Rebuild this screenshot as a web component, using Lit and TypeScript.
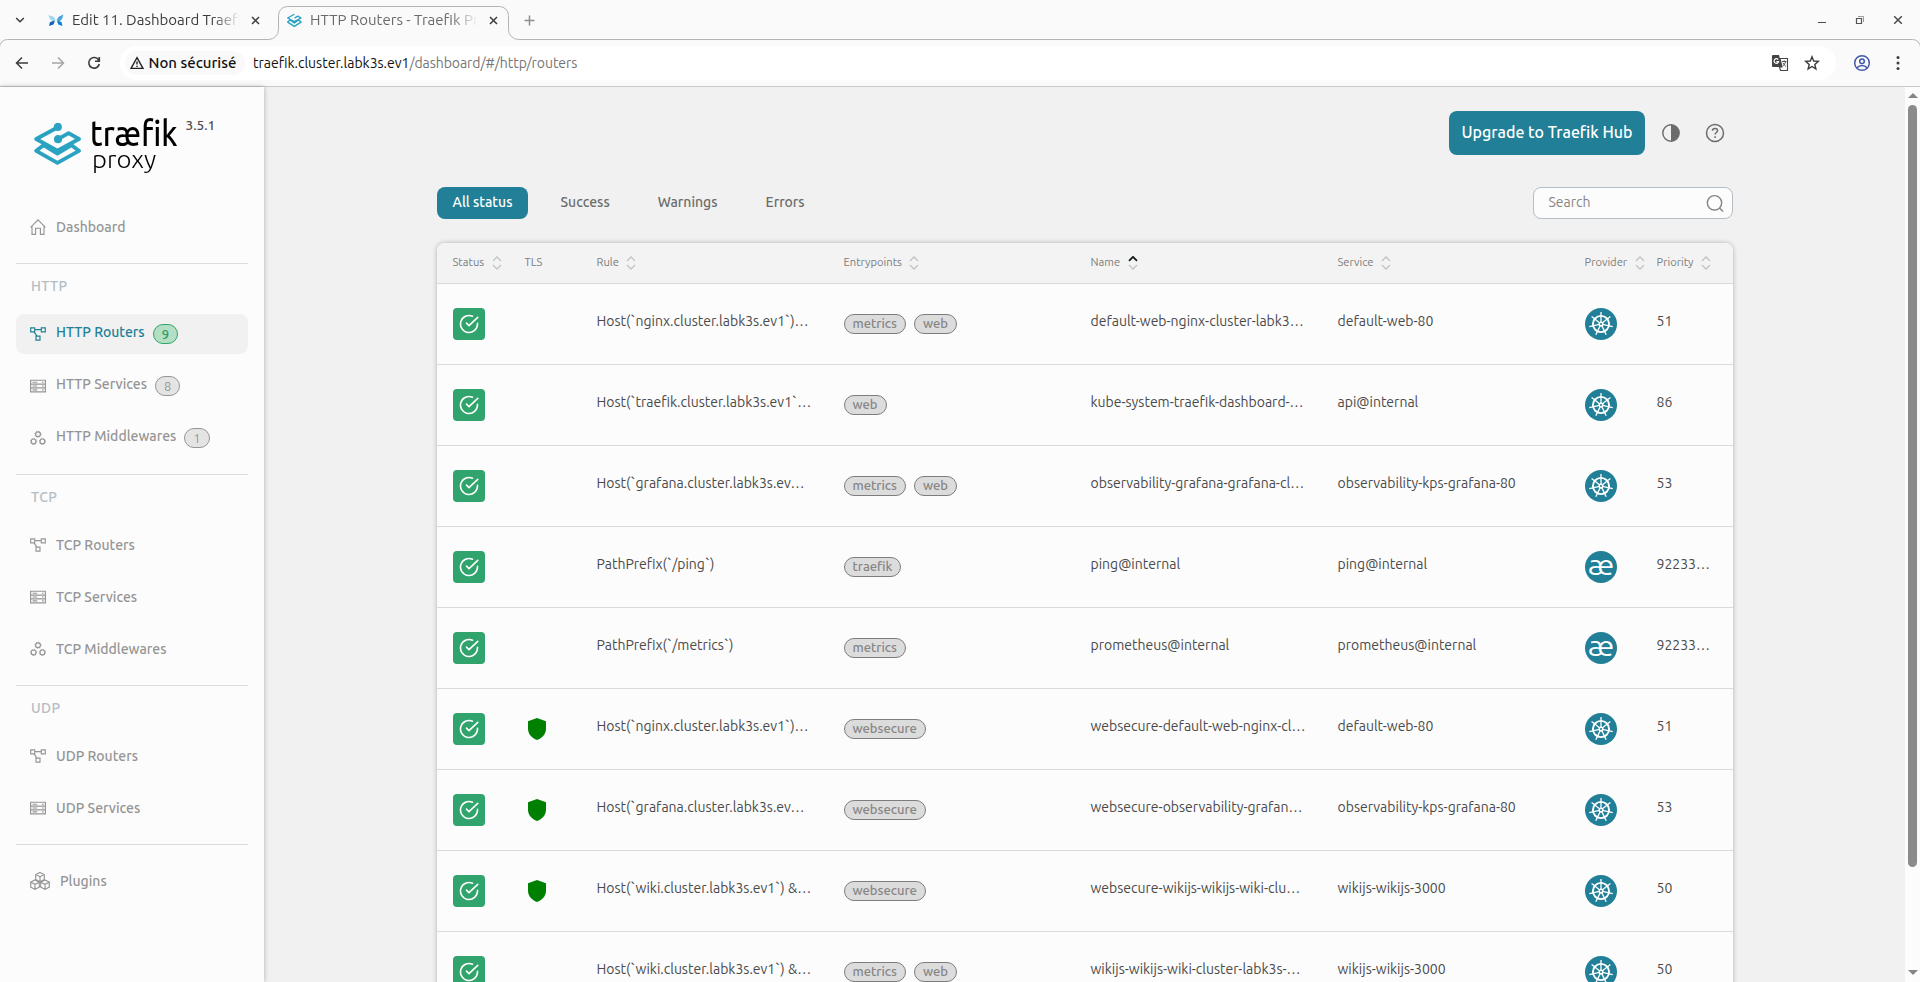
import { LitElement, html, css, svg, nothing } from "lit";
import { customElement, property } from "lit/decorators.js";

/* Wordmark text squeezed horizontally to an exact advance width. */
@customElement("fit-text")
class FitText extends LitElement {
  @property({ type: Number }) w = 0;
  static styles = css`
    :host { display: inline-block; white-space: nowrap; flex: none; }
    .t { display: inline-block; transform-origin: 0 50%; }
  `;
  render() { return html`<span class="t"><slot></slot></span>`; }
  updated() {
    const t = this.renderRoot.querySelector(".t") as HTMLElement;
    this.style.width = this.w + "px";
    const natural = t.offsetWidth;
    if (natural) t.style.transform = `scaleX(${this.w / natural})`;
  }
}

const cube = (x: number, y: number) => svg`<g transform="translate(${x} ${y})"><path d="M0 -4.6 4.3 -2.4V2.5L0 4.8-4.3 2.5V-2.4ZM-4.3 -2.4 0 -.3 4.3 -2.4M0 -.3V4.8"/></g>`;
const gear = (x: number, y: number) => svg`<circle cx=${x} cy=${y} r="2.4"/><circle cx=${x} cy=${y} r="3.1" stroke-width=".9" stroke-dasharray="1 1.434"/>`;

const navIcons: Record<string, unknown> = {
  home: html`<svg width="16" height="16" viewBox="0 0 16 16"><path d="M.6 8.3 8 .9l7.4 7.4M2 7.2v8.2h3.6V9.2h4.8v6.2H14V7.2"/></svg>`,
  routers: html`<svg width="16" height="16" viewBox="0 0 16 16"><path d="M.7 1.9h4v4h-4zM11.3 1.9h4v4h-4zM6 10.1h4v4H6zM4.7 3.6h6.6M4 5.9l3 4.2"/></svg>`,
  services: html`<svg width="16" height="16" viewBox="0 0 16 16"><path d="M.6 2.2h14.8v11.6H.6zM.6 6.1h14.8M.6 9.9h14.8M2.6 4.2h4.6M2.6 8h4.6M2.6 11.9h4.6M12 4.2h1.6M12 8h1.6M12 11.9h1.6"/></svg>`,
  middlewares: html`<svg width="16" height="16" viewBox="0 0 16 16">${gear(8, 4.2)}${gear(3.6, 11.4)}${gear(12.4, 11.4)}</svg>`,
  plugins: html`<svg width="20" height="20" viewBox="0 0 20 20">${cube(10, 6)}${cube(5, 13.6)}${cube(15, 13.6)}</svg>`,
};

type NavItem = [string, string, string?];
const sections: { label?: string; items: NavItem[] }[] = [
  { items: [["home", "Dashboard"]] },
  { label: "HTTP", items: [["routers", "HTTP Routers", "9"], ["services", "HTTP Services", "8"], ["middlewares", "HTTP Middlewares", "1"]] },
  { label: "TCP", items: [["routers", "TCP Routers"], ["services", "TCP Services"], ["middlewares", "TCP Middlewares"]] },
  { label: "UDP", items: [["routers", "UDP Routers"], ["services", "UDP Services"]] },
  { items: [["plugins", "Plugins"]] },
];

@customElement("side-nav")
class SideNav extends LitElement {
  static styles = css`
    :host { display: block; width: 264px; flex: none; background: #fcfcfc; box-shadow: 0 0 5px rgba(0,0,0,.28); z-index: 1; box-sizing: border-box; padding: 0 16px; color: #959595; font-weight: 500; }
    .brand { display: flex; height: 104px; padding: 27px 0 0 18px; box-sizing: border-box; }
    .mark { margin-top: 9px; }
    .words { color: #000; margin-left: 8px; width: 88px; display: flex; flex-direction: column; padding-top: 2px; }
    .word { font-size: 34.5px; line-height: 36px; height: 29px; }
    .sub { font-size: 25px; line-height: 28px; font-weight: 300; padding-left: 2px; }
    .ver { font-size: 13.6px; line-height: 18px; color: #4c4c4c; margin: 2px 0 0 7.5px; }
    section { border-bottom: 1px solid #dcdcdc; padding: 16px 0; display: flex; flex-direction: column; gap: 12px; }
    section.labeled { padding-top: 0; }
    section:last-child { border: 0; }
    .label { height: 38px; padding: 12px 0 0 15px; box-sizing: border-box; color: #b4bcc4; letter-spacing: .4px; }
    .item { height: 40px; border-radius: 8px; display: flex; align-items: center; padding-left: 14px; white-space: nowrap; }
    .item svg { fill: none; stroke: currentColor; stroke-width: 1.15; margin-right: 10px; flex: none; }
    .counted .name { padding-bottom: 5px; }
    .active { background: #f1f1f1; color: #217f97; }
    .badge { margin-left: 8px; height: 20px; min-width: 25px; padding: 0 8px; box-sizing: border-box; border: 1px solid #959595; background: #e4e4e4; border-radius: 10px; font-size: 13px; line-height: 19px; text-align: center; font-weight: 400; }
    .active .badge { background: #b4dfc4; border-color: #30a46c; color: #2b9a66; font-weight: 500; }
  `;
  render() {
    return html`
      <div class="brand">
        <svg class="mark" width="48" height="46" viewBox="0 0 48 46" fill="none" stroke="#2aa2c1" stroke-width="3.8" stroke-linejoin="round" stroke-linecap="round">
          <path d="M23.4 4.5 2.2 16l21.2 11.6L45 16 34.6 10.2 24 16.2"/>
          <path d="M9.5 22.2 2.2 27.8l21.2 12 21.6-12-7.5-5.6" />
          <path d="M9.5 22.2 23.4 30.5 37.5 22.2" />
          <circle cx="23.8" cy="3.9" r="2.2" fill="#2aa2c1"/><circle cx="24" cy="16.2" r="2.2" fill="#2aa2c1"/>
        </svg>
        <div class="words"><div class="word"><fit-text w="87.5">træfik</fit-text></div><div class="sub"><fit-text w="64">proxy</fit-text></div></div>
        <div class="ver">3.5.1</div>
      </div>
      ${sections.map((s) => html`<section class=${s.label ? "labeled" : ""}>
        ${s.label ? html`<div class="label">${s.label}</div>` : nothing}
        ${s.items.map(([icon, text, n]) => html`<div class="item ${n ? "counted" : ""} ${n === "9" ? "active" : ""}">
          ${navIcons[icon]}<span class="name">${text}</span>${n ? html`<span class="badge">${n}</span>` : nothing}
        </div>`)}
      </section>`)}
    `;
  }
}

const N1 = "Host(`nginx.cluster.labk3s.ev1`)…", G1 = "Host(`grafana.cluster.labk3s.ev…", W1 = "Host(`wiki.cluster.labk3s.ev1`) &…";
const rows: { tls?: boolean; rule: string; eps: string[]; name: string; svc: string; internal?: boolean; prio: string }[] = [
  { rule: N1, eps: ["metrics", "web"], name: "default-web-nginx-cluster-labk3…", svc: "default-web-80", prio: "51" },
  { rule: "Host(`traefik.cluster.labk3s.ev1`…", eps: ["web"], name: "kube-system-traefik-dashboard-…", svc: "api@internal", prio: "86" },
  { rule: G1, eps: ["metrics", "web"], name: "observability-grafana-grafana-cl…", svc: "observability-kps-grafana-80", prio: "53" },
  { rule: "PathPrefix(`/ping`)", eps: ["traefik"], name: "ping@internal", svc: "ping@internal", internal: true, prio: "92233…" },
  { rule: "PathPrefix(`/metrics`)", eps: ["metrics"], name: "prometheus@internal", svc: "prometheus@internal", internal: true, prio: "92233…" },
  { tls: true, rule: N1, eps: ["websecure"], name: "websecure-default-web-nginx-cl…", svc: "default-web-80", prio: "51" },
  { tls: true, rule: G1, eps: ["websecure"], name: "websecure-observability-grafan…", svc: "observability-kps-grafana-80", prio: "53" },
  { tls: true, rule: W1, eps: ["websecure"], name: "websecure-wikijs-wikijs-wiki-clu…", svc: "wikijs-wikijs-3000", prio: "50" },
  { rule: W1, eps: ["metrics", "web"], name: "wikijs-wikijs-wiki-cluster-labk3s-…", svc: "wikijs-wikijs-3000", prio: "50" },
];
const heads = ["Status", "TLS", "Rule", "Entrypoints", "Name", "Service", "Provider", "Priority"];

const spokes = [0, 1, 2, 3, 4, 5, 6].map((i) => svg`<path transform="rotate(${(i * 360) / 7} 16 16)" d="M16 4V14.5" />`);
const kube = html`<svg width="32" height="32" viewBox="0 0 32 32"><circle cx="16" cy="16" r="16" fill="#217f97"/><g stroke="#fff" fill="none" stroke-width="1.3"><circle cx="16" cy="16" r="8.1" stroke-width="1.9"/>${spokes}<circle cx="16" cy="16" r="1.8" stroke-width="1.5"/></g></svg>`;
const internalIcon = html`<svg width="32" height="32" viewBox="0 0 32 32"><circle cx="16" cy="16" r="16" fill="#217f97"/><text x="16" y="23.6" text-anchor="middle" font-size="28.5" font-weight="400" fill="#fff" textLength="26.5" lengthAdjust="spacingAndGlyphs">æ</text></svg>`;
const okIcon = html`<svg width="20" height="20" viewBox="0 0 24 24" fill="none" stroke="#fff" stroke-width="1.9" stroke-linecap="round" stroke-linejoin="round"><path d="M22.2 11.08V12a10.200 10.200 0 1 1-6-9.300"/><path d="M22.500 4 12 14 9 11"/></svg>`;
const shield = html`<svg class="shield" width="18" height="22" viewBox="0 0 18 22"><path d="M9 0 18 3.2V11c0 5-4 9-9 11C4 20 0 16 0 11V3.2Z" fill="#008000"/></svg>`;
const sorter = (up: boolean) => html`<svg width="10" height="14" viewBox="0 0 10 14" fill="none" stroke="#c1c8cd" stroke-width="1.4"><path d="M1 4.9 5 .9l4 4" stroke=${up ? "#11181c" : "#c1c8cd"} stroke-width=${up ? 1.8 : 1.4}/><path d="M1 9.1l4 4 4-4"/></svg>`;

@customElement("router-table")
class RouterTable extends LitElement {
  static styles = css`
    :host { display: block; width: 1296px; background: #fcfcfc; border-radius: 8px 8px 0 0; box-shadow: 0 0 5px rgba(0,0,0,.28); }
    .row { display: grid; grid-template-columns: 72px 72px 247px 247px 247px 247px 72px 72px; padding-left: 16px; border-bottom: 1px solid #dadada; height: 80px; color: #4a4a4a; }
    .head { height: 40px; background: #f3f3f3; border-radius: 8px 8px 0 0; color: #7c7c7c; font-size: 11.2px; }
    .cell { display: flex; align-items: center; white-space: nowrap; }
    .head .cell { gap: 7.5px; padding-bottom: 2px; box-sizing: border-box; }
    .head svg { margin-top: 2px; }
    .text { padding-bottom: 6px; }
    .ok { width: 32px; height: 32px; border-radius: 4px; background: #30a46c; display: flex; align-items: center; justify-content: center; }
    .shield { margin-left: 3px; }
    .eps { gap: 8px; }
    .pill { height: 20px; box-sizing: border-box; border: 1px solid #7d7d7d; border-radius: 10px; background: #dcdcdc; color: #868686; font-size: 13px; font-weight: 500; line-height: 16.5px; padding: 0 8px; }
  `;
  render() {
    return html`
      <div class="row head">${heads.map((t) => html`<div class="cell"><span>${t}</span>${t !== "TLS" ? sorter(t === "Name") : nothing}</div>`)}</div>
      ${rows.map((r) => html`<div class="row">
        <div class="cell"><div class="ok">${okIcon}</div></div>
        <div class="cell">${r.tls ? shield : nothing}</div>
        <div class="cell text">${r.rule}</div>
        <div class="cell eps">${r.eps.map((t) => html`<div class="pill">${t}</div>`)}</div>
        <div class="cell text">${r.name}</div>
        <div class="cell text">${r.svc}</div>
        <div class="cell">${r.internal ? internalIcon : kube}</div>
        <div class="cell text">${r.prio}</div>
      </div>`)}
    `;
  }
}

const closeIcon = html`<svg width="9" height="9" viewBox="0 0 9 9"><path d="M1 1l7 7M8 1 1 8" stroke="#3c3c3c" stroke-width="1.5"/></svg>`;

@customElement("browser-chrome")
class BrowserChrome extends LitElement {
  static styles = css`
    :host { display: block; position: relative; height: 87px; background: #fafafa; box-sizing: border-box; border-bottom: 1px solid #c9c9c9; color: #3c3c3c; }
    .outline { position: absolute; left: 0; top: 0; pointer-events: none; }
    .tabs { height: 40px; display: flex; align-items: center; font-size: 15px; }
    .chev { margin-left: 15px; }
    .tab { display: flex; align-items: center; width: 213px; margin-left: 23px; }
    .tab.current { margin-left: 26px; color: #6a6a6a; width: 212px; }
    .title { width: 168px; margin: 0 11px 0 8px; overflow: hidden; white-space: nowrap; flex: none; -webkit-mask-image: linear-gradient(90deg, #000 84%, transparent 100%); }
    .plus { margin-left: 25px; }
    .grow { flex: 1; }
    .win { display: flex; align-items: center; gap: 28px; padding-right: 17px; }
    .bar { height: 46px; display: flex; align-items: center; }
    .nav { display: flex; gap: 20px; margin-left: 14px; width: 106px; }
    .omni { flex: none; width: 1716px; height: 34px; border-radius: 17px; background: #fff; display: flex; align-items: center; box-sizing: border-box; padding: 0 16px 0 5px; }
    .chip { background: #f9f9f9; height: 24px; border-radius: 12px; width: 120px; box-sizing: border-box; padding-left: 5px; display: flex; align-items: center; gap: 4.5px; color: #111; font-weight: 500; font-size: 15px; margin-right: 8px; white-space: nowrap; }
    .host { color: #111; } .path { color: #757575; letter-spacing: -.06px; }
    .star { margin-left: 15px; }
    .me { margin-left: 17px; } .dots { margin-left: 25px; }
  `;
  render() {
    return html`
      <svg class="outline" width="1920" height="87" viewBox="0 0 1920 87" fill="none" stroke="#b2b4b3"><path d="M-.5 47.5a8 8 0 0 1 8-8H268.500a10 10 0 0 0 10-10V15.500a9 9 0 0 1 9-9H499.500a9 9 0 0 1 9 9V29.500a10 10 0 0 0 10 10H1912.500a8 8 0 0 1 8 8"/></svg>
      <div class="tabs">
        <svg class="chev" width="10" height="8" viewBox="0 0 10 8"><path d="M1.200 2 5 5.800 8.800 2" fill="none" stroke="#3c3c3c" stroke-width="1.500"/></svg>
        <div class="tab">
          <svg width="16" height="16" viewBox="0 0 16 16"><path d="M.5 3 6 5l1.500 3L5 9.500 2 7Z" fill="#9fd6ee"/><path d="M15.500 2.500 11 4.500 8.500 8l3 1.500L14 7Z" fill="#4aa5dd"/><path d="M1 14l1-4 5-1.500L5.500 12.500Z" fill="#1565b8"/><path d="M14.500 14 13.500 10 8.800 8.500l1.500 4Z" fill="#0d7fd6"/></svg>
          <div class="title">Edit 11. Dashboard Traefik</div>${closeIcon}
        </div>
        <div class="tab current">
          <svg width="15" height="15" viewBox="0 0 48 46" fill="none" stroke="#2aa2c1" stroke-width="4.500" stroke-linejoin="round"><path d="M23.400 3 2.200 15l21.200 11.600L45 15 34.600 9.200 24 15.200M9.500 21.200 2.200 28l21.200 14L45 28l-7.500-6.800L23.400 31Z"/></svg>
          <div class="title">HTTP Routers - Traefik Proxy</div>${closeIcon}
        </div>
        <svg class="plus" width="11" height="11" viewBox="0 0 11 11"><path d="M5.500 .5v10M.5 5.500h10" stroke="#8d8d8d" stroke-width="1.500"/></svg>
        <div class="grow"></div>
        <div class="win">
          <svg width="10" height="10" viewBox="0 0 10 10"><path d="M1 7.500h8" stroke="#4a4a4a"/></svg>
          <svg width="10" height="10" viewBox="0 0 10 10" fill="none" stroke="#555"><path d="M1.500 3.500h5v5h-5z" stroke-width="1.200"/><path d="M3 1.500h5.500V7" stroke="#999"/></svg>
          <svg width="10" height="10" viewBox="0 0 10 10"><path d="M1.200 1.200l7.600 7.600M8.800 1.200 1.200 8.800" stroke="#4a4a4a" stroke-width="1.500"/></svg>
        </div>
      </div>
      <div class="bar">
        <div class="nav">
          <svg width="16" height="16" viewBox="0 0 16 16" fill="none" stroke="#3c3c3c" stroke-width="1.500"><path d="M14 8H2.800M8 2.500 2.500 8 8 13.500"/></svg>
          <svg width="16" height="16" viewBox="0 0 16 16" fill="none" stroke="#a5a5a5" stroke-width="1.500"><path d="M2 8h11.200M8 2.500 13.500 8 8 13.500"/></svg>
          <svg width="16" height="16" viewBox="0 0 16 16" fill="none" stroke="#3c3c3c" stroke-width="1.600"><path d="M12.600 5A5.300 5.300 0 1 0 13.300 9M13.300 2v4.200H9"/></svg>
        </div>
        <div class="omni">
          <div class="chip"><svg width="14" height="14" viewBox="0 0 14 14" fill="none" stroke="#222" stroke-width="1.400"><path d="M7 1.600 13 12.400H1ZM7 5.400v3.200M7 9.800v1.200"/></svg><span>Non sécurisé</span></div>
          <span class="host">traefik.cluster.labk3s.ev1</span><span class="path">/dashboard/#/http/routers</span>
          <div class="grow"></div>
          <svg width="18" height="18" viewBox="0 0 18 18"><path d="M2 1h6l3 12H2a1 1 0 0 1-1-1V2a1 1 0 0 1 1-1Z" fill="#444"/><path d="M9 4.500h7.500v12H9.500L8.500 13H11Z" fill="#fff" stroke="#444" stroke-width="1.100"/><path d="M7.200 5.600a2.300 2.300 0 1 0 .4 2H5.400" fill="none" stroke="#fff" stroke-width="1.200"/><path d="M11 7.500h4.500M13.200 6.300v1.200M14.600 7.500c-.5 2.200-1.500 3.600-3 4.800M12 8.800c.7 1.700 1.700 2.700 3 3.700" fill="none" stroke="#444" stroke-width=".9"/></svg>
          <svg class="star" width="16" height="16" viewBox="0 0 16 16"><path d="M8 1.800 9.700 6l4.600.4-3.500 3 1.100 4.500L8 11.500l-3.900 2.400 1.100-4.500-3.500-3L6.300 6Z" fill="none" stroke="#3c3c3c" stroke-width="1.400"/></svg>
        </div>
        <svg class="me" width="18" height="18" viewBox="0 0 18 18" fill="none" stroke="#4259a9" stroke-width="1.500"><circle cx="9" cy="9" r="7.300"/><circle cx="9" cy="7.200" r="2.300"/><path d="M3.800 14c1.400-1.700 3.200-2.400 5.200-2.400s3.800.7 5.200 2.400"/></svg>
        <svg class="dots" width="4" height="16" viewBox="0 0 4 16" fill="#3c3c3c"><circle cx="2" cy="2.500" r="1.500"/><circle cx="2" cy="8" r="1.500"/><circle cx="2" cy="13.500" r="1.500"/></svg>
      </div>
    `;
  }
}

@customElement("app-root")
class AppRoot extends LitElement {
  static styles = css`
    :host { display: flex; flex-direction: column; width: 1920px; height: 982px; overflow: hidden; font-family: Ubuntu, "Noto Sans", sans-serif; font-size: 14px; line-height: 20px; background: #f1f1f1; }
    .page { flex: 1; min-height: 0; display: flex; }
    .main { flex: 1; display: flex; flex-direction: column; align-items: center; overflow: hidden; }
    .top { width: 1296px; height: 44px; margin-top: 24px; display: flex; align-items: center; justify-content: flex-end; flex: none; }
    .cta { width: 196px; height: 44px; box-sizing: border-box; padding: 11px 0 0 1px; text-align: center; border-radius: 8px; background: #217f97; color: #fff; font-weight: 500; font-size: 16px; margin-right: 16px; white-space: nowrap; }
    .top svg { margin-right: 24px; } .top svg:last-child { margin-right: 8px; }
    .filters { width: 1296px; height: 32px; margin: 32px 0 24px; display: flex; align-items: center; flex: none; color: #6c6c6c; font-weight: 500; }
    .f { height: 32px; box-sizing: border-box; padding: 5px 16px 0; margin-right: 16px; border-radius: 8px; }
    .on { background: #217f97; color: #fff; }
    .search { margin-left: auto; width: 200px; height: 32px; box-sizing: border-box; border: 1px solid #b5bdc5; border-radius: 8px; background: #fcfcfc; display: flex; align-items: center; justify-content: space-between; padding: 0 8px 0 15px; color: #858585; font-weight: 400; }
    .search span { padding-bottom: 2px; }
    router-table { flex: none; }
    .scroll { width: 15px; background: #fcfcfc; display: flex; flex-direction: column; align-items: center; flex: none; }
    .up { margin-top: 6px; border: 5px solid transparent; border-top: 0; border-bottom-color: #858585; }
    .thumb { width: 9px; height: 762px; margin: 7px 0 auto; border-radius: 5px; background: #8b8b8b; }
    .down { margin-bottom: 7px; border: 5px solid transparent; border-bottom: 0; border-top-color: #858585; }
  `;
  render() {
    return html`
      <browser-chrome></browser-chrome>
      <div class="page">
        <side-nav></side-nav>
        <div class="main">
          <div class="top">
            <div class="cta">Upgrade to Traefik Hub</div>
            <svg width="20" height="20" viewBox="0 0 20 20"><circle cx="10" cy="10" r="8.200" fill="none" stroke="#6c6c6c" stroke-width="1.400"/><path d="M10 1.800a8.200 8.200 0 0 1 0 16.400Z" fill="#6c6c6c"/></svg>
            <svg width="20" height="20" viewBox="0 0 20 20" fill="none" stroke="#6c6c6c" stroke-width="1.500"><circle cx="10" cy="10" r="8.500"/><path d="M7.400 7.800c.1-1.500 1.100-2.400 2.600-2.400s2.600.9 2.600 2.200c0 1.900-2.500 1.900-2.500 4M10.100 13.200v1.700"/></svg>
          </div>
          <div class="filters">
            <div class="f on">All status</div>
            <div class="f">Success</div>
            <div class="f">Warnings</div>
            <div class="f">Errors</div>
            <div class="search"><span>Search</span><svg width="19" height="19" viewBox="0 0 19 19" fill="none" stroke="#858585" stroke-width="1.400"><circle cx="9.500" cy="8.800" r="7.200"/><path d="M14.500 14l3.600 3.600"/></svg></div>
          </div>
          <router-table></router-table>
        </div>
        <div class="scroll"><div class="up"></div><div class="thumb"></div><div class="down"></div></div>
      </div>
    `;
  }
}
